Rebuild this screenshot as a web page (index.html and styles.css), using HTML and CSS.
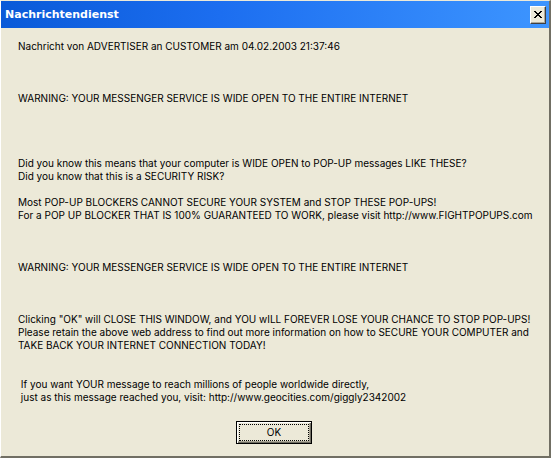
FILE: index.html
```html
<!DOCTYPE html>
<html>
<head>
    <title>Nachrichtendienst</title>
    <meta charset="UTF-8">
    <link rel="stylesheet" href="styles.css">
</head>
<body>
    <div class="window">
        <div class="titlebar">
            <span class="title">Nachrichtendienst</span>
            <button class="close-button" title="Schließen">
                <svg width="8" height="7" viewBox="0 0 8 7">
                    <path d="M0 0h2v1h1v1h2v-1h1v-1h2v1h-1v1h-1v1h-1v1h1v1h1v1h1v1h-2v-1h-1v-1h-2v1h-1v1h-2v-1h1v-1h1v-1h1v-1h-1v-1h-1v-1h-1z" fill="#000"/>
                </svg>
            </button>
        </div>
        <div class="content">
            <div class="message">Nachricht von ADVERTISER an CUSTOMER am 04.02.2003 21:37:46



WARNING: YOUR MESSENGER SERVICE IS WIDE OPEN TO THE ENTIRE INTERNET




Did you know this means that your computer is WIDE OPEN to POP-UP messages LIKE THESE?
Did you know that this is a SECURITY RISK?

Most POP-UP BLOCKERS CANNOT SECURE YOUR SYSTEM and STOP THESE POP-UPS!
For a POP UP BLOCKER THAT IS 100% GUARANTEED TO WORK, please visit http://www.FIGHTPOPUPS.com



WARNING: YOUR MESSENGER SERVICE IS WIDE OPEN TO THE ENTIRE INTERNET



Clicking "OK" will CLOSE THIS WINDOW, and YOU wILL FOREVER LOSE YOUR CHANCE TO STOP POP-UPS!
Please retain the above web address to find out more information on how to SECURE YOUR COMPUTER and
TAKE BACK YOUR INTERNET CONNECTION TODAY!


 If you want YOUR message to reach millions of people worldwide directly,
 just as this message reached you, visit: http://www.geocities.com/giggly2342002</div>
            <div class="actions">
                <button class="ok-button"><span class="focus">OK</span></button>
            </div>
        </div>
    </div>
</body>
</html>
```

FILE: styles.css
```css
html, body {
    margin: 0;
    padding: 0;
    background-color: #ece9d8;
}
.window {
    width: 551px;
    height: 458px;
    box-sizing: border-box;
    display: flex;
    flex-direction: column;
    background-color: #ece9d8;
    border-top: 1px solid #ece9d8;
    border-left: 1px solid #ffffff;
    border-right: 2px solid #716f64;
    border-bottom: 2px solid #716f64;
    font-family: Inter, "DejaVu Sans", sans-serif;
    font-size: 10px;
}
.titlebar {
    height: 27px;
    display: flex;
    align-items: center;
    justify-content: space-between;
    padding: 0 3px 0 4px;
    background: linear-gradient(to right, #0a5ad8 0%, #1c6ef0 40%, #3d95ff 100%);
}
.title {
    color: #ffffff;
    font-weight: bold;
    font-size: 11px;
    font-family: "DejaVu Sans", sans-serif;
}
.close-button {
    width: 16px;
    height: 18px;
    padding: 0;
    display: flex;
    align-items: center;
    justify-content: center;
    background-color: #ece9d8;
    border: 1px solid;
    border-color: #ffffff #404040 #404040 #ffffff;
    box-shadow: inset -1px -1px 0 #aca899;
}
.content {
    flex: 1;
    padding: 12px 10px 0 17px;
    display: flex;
    flex-direction: column;
}
.message {
    white-space: pre;
    line-height: 13px;
    color: #000000;
}
.actions {
    display: flex;
    justify-content: center;
    margin-top: 17px;
    padding-right: 9px;
}
.ok-button {
    width: 76px;
    height: 23px;
    padding: 2px;
    background-color: #ece9d8;
    border: 1px solid #000000;
    box-shadow: inset 1px 1px 0 #ffffff, inset -1px -1px 0 #716f64, inset -2px -2px 0 #aca899;
    font-family: Inter, "DejaVu Sans", sans-serif;
    font-size: 10px;
    color: #000000;
}
.focus {
    display: block;
    height: 100%;
    box-sizing: border-box;
    border: 1px dotted #000000;
    line-height: 15px;
}
```
